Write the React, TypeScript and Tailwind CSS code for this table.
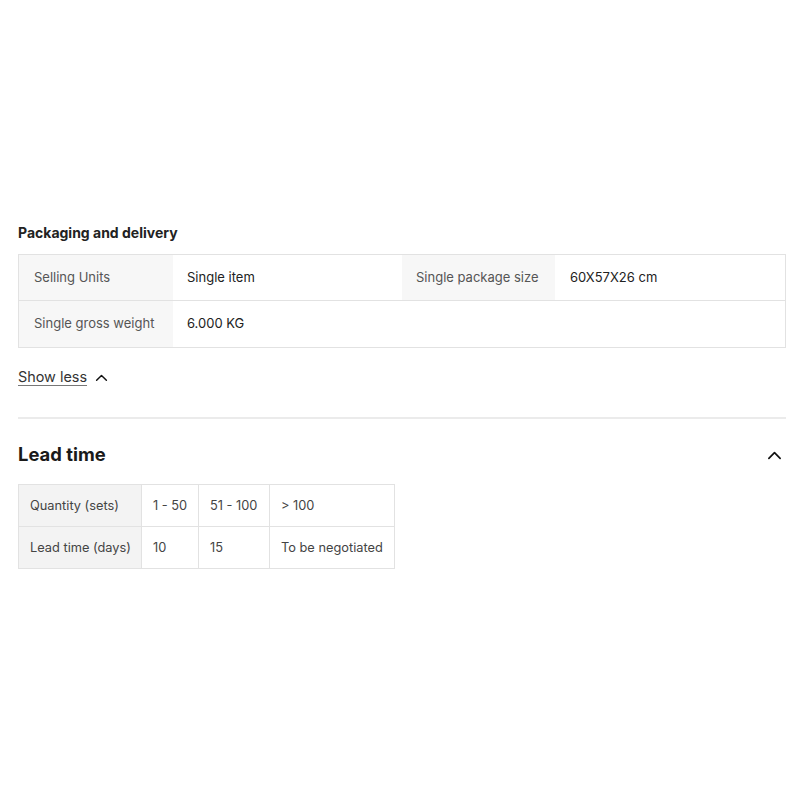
import React from "react";

const Chevron = ({ className }: { className?: string }) => (
  <svg className={className} viewBox="0 0 16 10" fill="none" stroke="#111" strokeWidth="1.8" strokeLinecap="round" strokeLinejoin="round">
    <path d="M2 8.5 L8 2.5 L14 8.5" />
  </svg>
);

export default function App() {
  return (
    <div className="w-[800px] h-[800px] bg-white px-[18px] pt-[223px]" style={{ fontFamily: "Inter, 'Noto Sans', sans-serif" }}>
      <div className="text-[14px] leading-[20px] font-bold text-[#222]">Packaging and delivery</div>
      <div className="mt-[11px] w-[768px] border border-[#e2e2e2] text-[13px]">
        <div className="flex h-[46px] border-b border-[#e2e2e2]">
          <div className="w-[154px] bg-[#f7f7f7] pl-[15px] flex items-center text-[#555]">Selling Units</div>
          <div className="w-[229px] pl-[14px] flex items-center text-[#222]">Single item</div>
          <div className="w-[153px] bg-[#f7f7f7] pl-[14px] flex items-center text-[#555]">Single package size</div>
          <div className="flex-1 pl-[15px] flex items-center text-[#222]">60X57X26 cm</div>
        </div>
        <div className="flex h-[46px]">
          <div className="w-[154px] bg-[#f7f7f7] pl-[15px] flex items-center text-[#555]">Single gross weight</div>
          <div className="w-[229px] pl-[14px] flex items-center text-[#222]">6.000 KG</div>
        </div>
      </div>
      <div className="mt-[18px] flex items-center h-[22px] gap-[8px]">
        <span className="text-[14.4px] text-[#333] underline underline-offset-[3px] decoration-[#777]">Show less</span>
        <Chevron className="w-[13px] h-[9px]" />
      </div>
      <div className="mt-[29px] h-[2px] w-[768px] bg-[#ebebeb]" />
      <div className="mt-[23px] flex items-center justify-between w-[768px] h-[26px]">
        <span className="text-[18.4px] font-bold text-[#1a1a1a]">Lead time</span>
        <Chevron className="w-[15px] h-[10px] mr-[4px]" />
      </div>
      <div className="mt-[16px] w-[377px] border border-[#e2e2e2] text-[12.8px] text-[#444]">
        <div className="flex h-[42px] border-b border-[#e2e2e2]">
          <div className="w-[123px] bg-[#f3f3f3] pl-[11px] flex items-center border-r border-[#e2e2e2]">Quantity (sets)</div>
          <div className="w-[57px] pl-[11px] flex items-center border-r border-[#e2e2e2]">1 - 50</div>
          <div className="w-[71px] pl-[11px] flex items-center border-r border-[#e2e2e2]">51 - 100</div>
          <div className="flex-1 pl-[11px] flex items-center">&gt; 100</div>
        </div>
        <div className="flex h-[41px]">
          <div className="w-[123px] bg-[#f3f3f3] pl-[11px] flex items-center border-r border-[#e2e2e2]">Lead time (days)</div>
          <div className="w-[57px] pl-[11px] flex items-center border-r border-[#e2e2e2]">10</div>
          <div className="w-[71px] pl-[11px] flex items-center border-r border-[#e2e2e2]">15</div>
          <div className="flex-1 pl-[11px] flex items-center">To be negotiated</div>
        </div>
      </div>
    </div>
  );
}
